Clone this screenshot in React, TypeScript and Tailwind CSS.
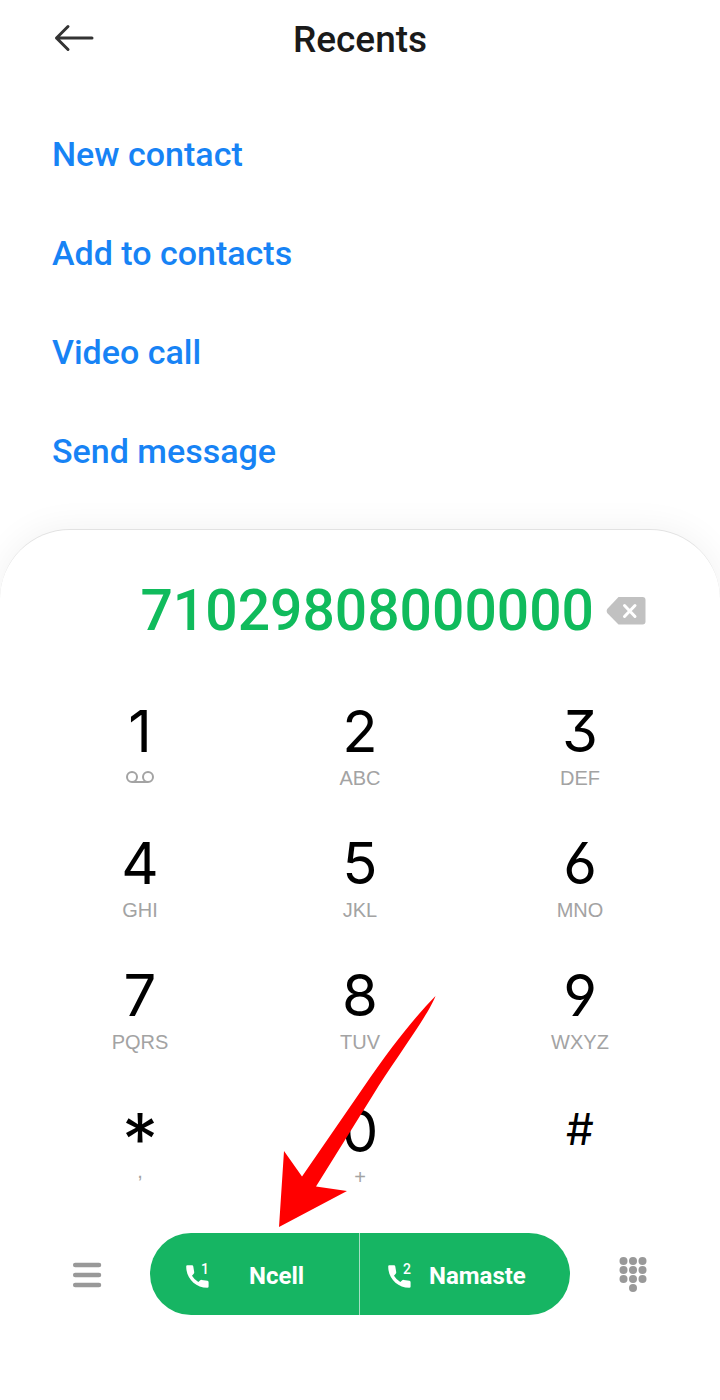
import React, { useState } from "react";
import clsx from "clsx";

const links = ["New contact", "Add to contacts", "Video call", "Send message"];

type Key = {
  digit: string;
  letters?: string;
  digitStyle?: string;
  lettersStyle?: string;
};

const keys: Key[] = [
  { digit: "1" },
  { digit: "2", letters: "ABC" },
  { digit: "3", letters: "DEF" },
  { digit: "4", letters: "GHI" },
  { digit: "5", letters: "JKL" },
  { digit: "6", letters: "MNO" },
  { digit: "7", letters: "PQRS" },
  { digit: "8", letters: "TUV" },
  { digit: "9", letters: "WXYZ" },
  {
    digit: "*",
    letters: ",",
    digitStyle: "text-[72px] leading-[80px]",
    lettersStyle: "leading-4",
  },
  { digit: "0", letters: "+" },
  { digit: "#", letters: "", digitStyle: "text-[44px] leading-[60px]" },
];

const BackArrow = () => (
  <svg
    className="h-8 w-10"
    viewBox="0 0 40 32"
    fill="none"
    stroke="#333333"
    strokeWidth="3"
    strokeLinecap="round"
    strokeLinejoin="round"
    aria-hidden="true"
  >
    <path d="M38 14H2.500M14 2.500L2.500 14L14 25.500" />
  </svg>
);

const Backspace = () => (
  <svg className="h-7 w-10" viewBox="0 0 40 28" aria-hidden="true">
    <path
      d="M12.500 0H36.500Q39.500 0 39.500 3V24.500Q39.500 27.500 36.500 27.500H12.500L1.200 16Q0 14 1.200 12Z"
      fill="#c1c1c1"
    />
    <path
      d="M18.500 8.500L29 19.500M29 8.500L18.500 19.500"
      stroke="#fff"
      strokeWidth="3"
      strokeLinecap="round"
    />
  </svg>
);

const Voicemail = () => (
  <svg
    className="h-7 w-7"
    viewBox="0 0 28 28"
    fill="none"
    stroke="#a3a3a3"
    strokeWidth="2"
    aria-hidden="true"
  >
    <circle cx="6" cy="13" r="5" />
    <circle cx="22" cy="13" r="5" />
    <path d="M6 18H22" />
  </svg>
);

const Handset = ({ sim }: { sim: string }) => (
  <span className="relative size-[23px] shrink-0">
    <svg className="size-full" viewBox="0 0 23 23" fill="#fff" aria-hidden="true">
      <path d="M1.300 .3H6Q7.100 .3 7.300 1.400L8.200 7Q8.400 8.200 7.500 9L6 10.800Q8.500 15 12.300 17L14 15.400Q14.800 14.700 15.800 14.900L21.500 15.800Q22.600 16 22.600 17.200V21.500Q22.600 22.800 21.300 22.800C9.500 22.800 .2 13.500 .2 1.600Q.2 .3 1.300 .3Z" />
    </svg>
    <span className="absolute -top-1 right-0 text-sm leading-4 font-medium">{sim}</span>
  </span>
);

const Menu = () => (
  <svg
    className="h-8 w-[30px]"
    viewBox="0 0 30 32"
    stroke="#999999"
    strokeWidth="4.500"
    strokeLinecap="round"
    aria-hidden="true"
  >
    <path d="M3.200 7H27M3.200 17H27M3.200 27H27" />
  </svg>
);

const Dialpad = () => (
  <svg className="h-9 w-[30px]" viewBox="0 0 30 36" fill="#999999" aria-hidden="true">
    {[5, 14, 23].map((y) =>
      [5.5, 15, 24.5].map((x) => <circle key={`${x}-${y}`} cx={x} cy={y} r="4" />)
    )}
    <circle cx="15" cy="32" r="4" />
  </svg>
);

// Red pointer towards the first SIM button
const Pointer = () => (
  <svg
    className="pointer-events-none absolute bottom-full left-32 mb-1.5 h-[231px] w-[158px]"
    viewBox="0 0 158 231"
    fill="#ff0000"
    aria-hidden="true"
  >
    <path d="M157.500 0C138 20 115 48 85 92L24 180.500L6 155L1 231L69 195L38 190.500L95 99C115 66 150 20 157.500 0Z" />
  </svg>
);

export default function App() {
  const [number, setNumber] = useState("71029808000000");

  return (
    <div className="flex min-h-screen flex-col bg-white font-[Roboto,sans-serif]">
      <header className="grid grid-cols-[40px_1fr_40px] items-center px-[54px] pt-4">
        <button type="button" aria-label="Back">
          <BackArrow />
        </button>
        <h1 className="text-center text-[37px] leading-12 font-medium text-[#1a1a1a]">
          Recents
        </h1>
      </header>

      <nav className="flex flex-col items-start gap-[59px] px-[52px] pt-[70px] pb-[58px]">
        {links.map((link) => (
          <a
            key={link}
            href="#"
            className="text-[34px] leading-10 font-medium text-[#1783f5]"
          >
            {link}
          </a>
        ))}
      </nav>

      <main className="flex-1 rounded-t-[70px] border-t border-[#e2e2e2] bg-white pt-[45px] pb-20 shadow-[0_0_36px_rgba(0,0,0,0.06)]">
        {/* Dialled number */}
        <div className="flex items-center gap-3 pr-[74px] pl-10">
          <input
            type="text"
            aria-label="Phone number"
            value={number}
            onChange={(e) => setNumber(e.target.value)}
            className="h-[72px] w-full min-w-0 text-right text-[57px] font-medium text-[#10bb5c] outline-none"
          />
          <button
            type="button"
            aria-label="Delete"
            onClick={() => setNumber(number.slice(0, -1))}
          >
            <Backspace />
          </button>
        </div>

        {/* Keypad */}
        <div className="mt-[52px] grid grid-cols-3 gap-y-[39px] px-[30px]">
          {keys.map(({ digit, letters, digitStyle, lettersStyle }) => (
            <button
              key={digit}
              type="button"
              onClick={() => setNumber(number + digit)}
              className={clsx(
                "flex flex-col items-center",
                "*0#".includes(digit) ? "pt-1" : "gap-px"
              )}
            >
              <span
                className={clsx(
                  "h-16 font-[Inter,sans-serif] text-black [font-feature-settings:'cv03','cv04','cv09']",
                  digitStyle ?? "text-[58px] leading-16"
                )}
              >
                {digit}
              </span>
              {letters === undefined ? (
                <Voicemail />
              ) : (
                <span
                  className={clsx(
                    "h-7 font-['Liberation_Sans',sans-serif] text-xl text-[#a3a3a3]",
                    lettersStyle ?? "leading-7"
                  )}
                >
                  {letters}
                </span>
              )}
            </button>
          ))}
        </div>

        {/* Call bar */}
        <div className="mt-[42px] flex items-center gap-12 px-[72px]">
          <button type="button" aria-label="Menu">
            <Menu />
          </button>
          <div className="relative grid h-[82px] flex-1 grid-cols-2 text-2xl font-bold text-white">
            <button
              type="button"
              className="flex items-center gap-10 rounded-l-full border-r border-[#a5dfc2] bg-[#16b563] pt-1 pl-9"
            >
              <Handset sim="1" />
              Ncell
            </button>
            <button
              type="button"
              className="flex items-center gap-[18px] rounded-r-full bg-[#16b563] pt-1 pl-7"
            >
              <Handset sim="2" />
              Namaste
            </button>
            <Pointer />
          </div>
          <button type="button" aria-label="Hide keypad">
            <Dialpad />
          </button>
        </div>
      </main>
    </div>
  );
}
